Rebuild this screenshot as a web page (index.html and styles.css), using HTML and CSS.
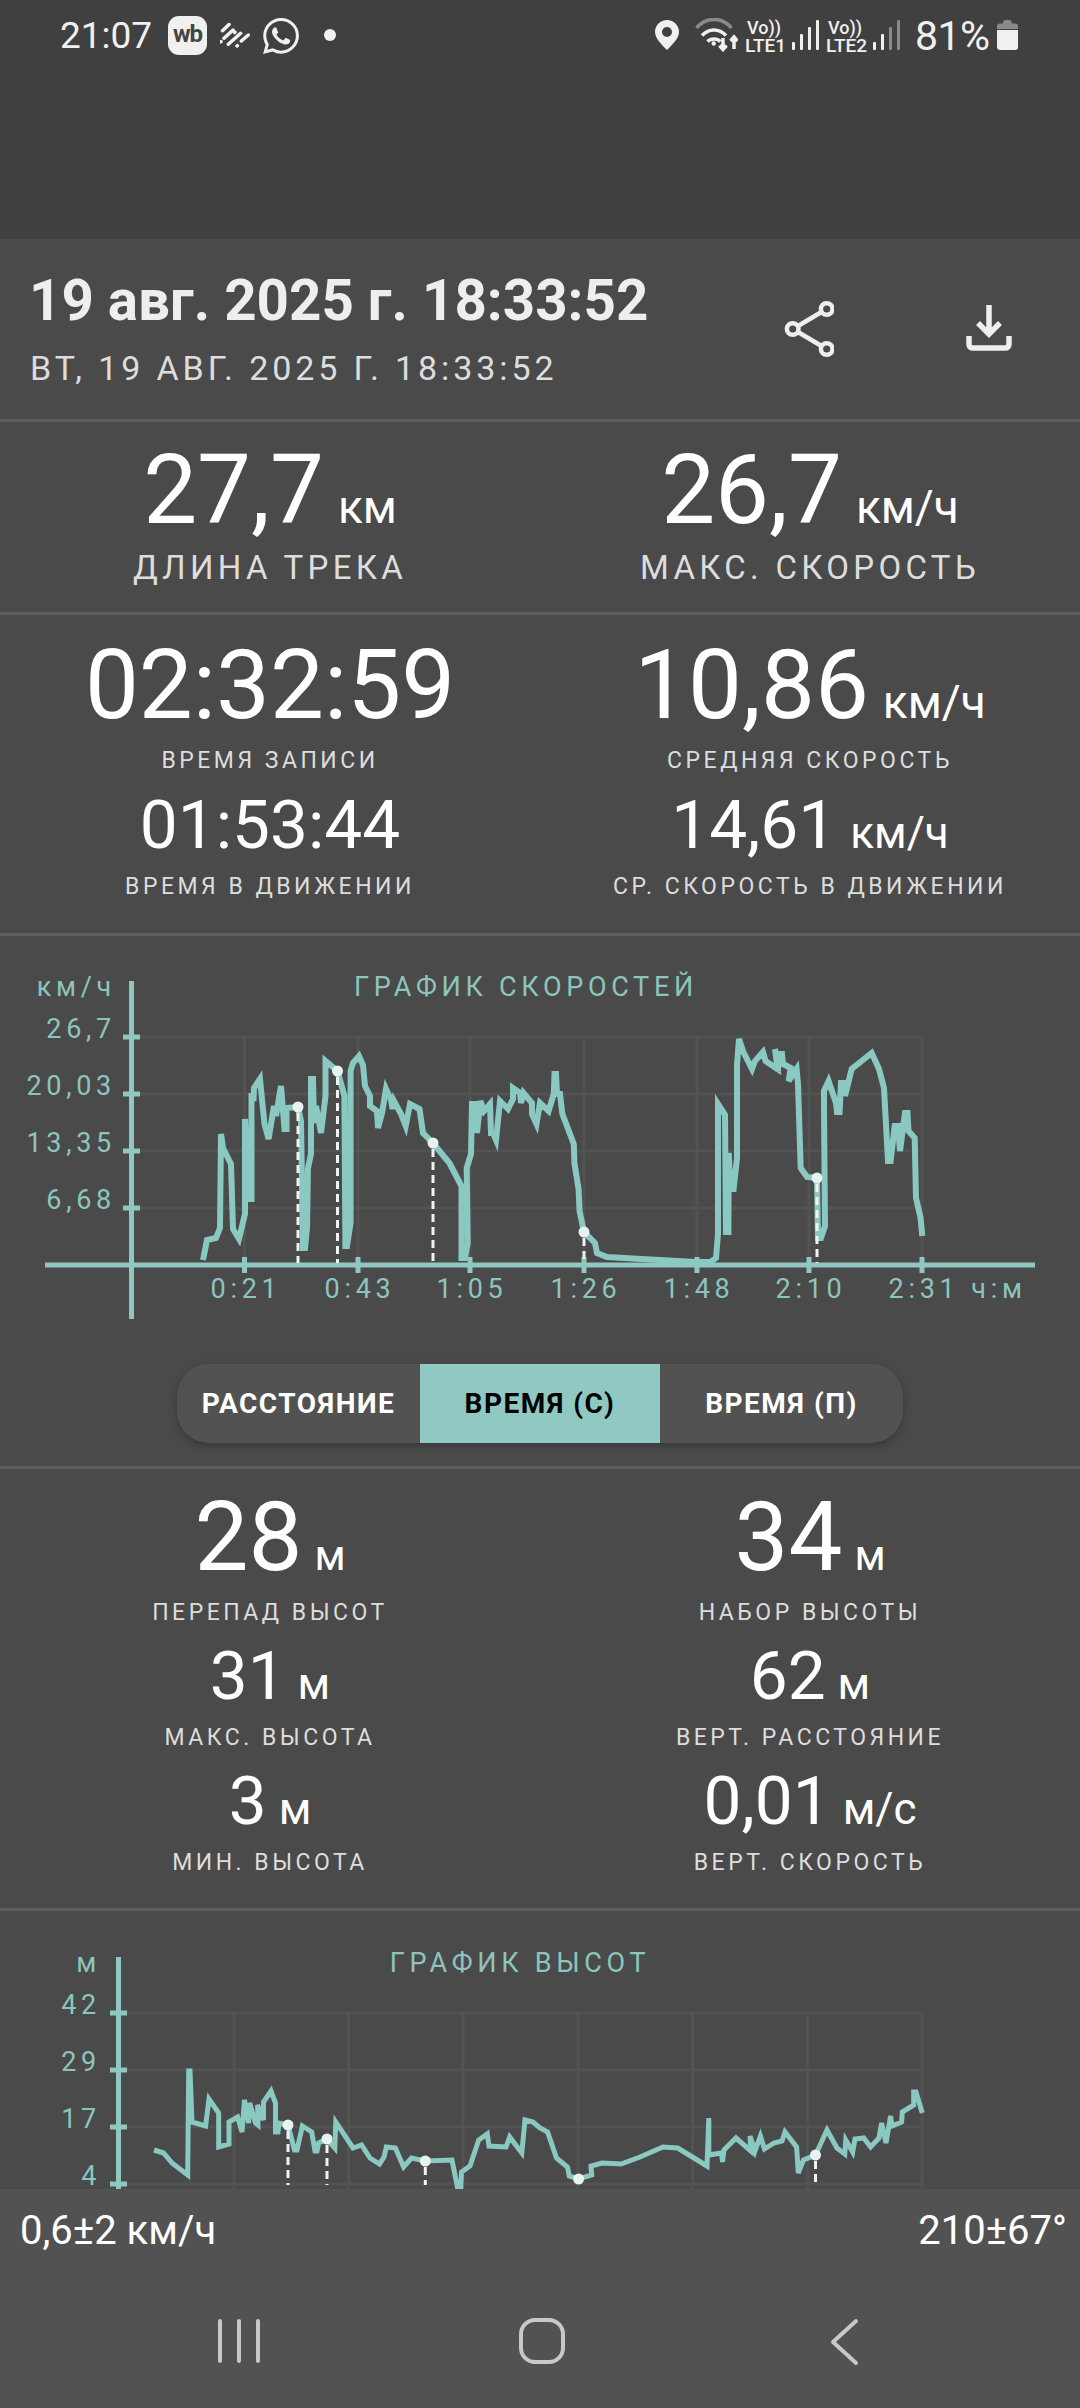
FILE: index.html
```html
<!DOCTYPE html>
<html lang="ru">
	<head>
		<meta charset="utf-8">
		<meta name="viewport" content="width=device-width, initial-scale=1">
		<title>Трек</title>
		<link rel="stylesheet" href="styles.css">
	</head>

	<body>
		<div id="app">
			<div id="statusbar">
				<span class="sb-time">21:07</span>
				<span class="sb-wb">wb</span>
				<svg class="sb-streak" width="30" height="26" viewBox="221 22 30 26">
					<path d="M223.5 30.7 230 24.5M225 38.3 234 30M229.3 44.3 241.7 33.3M242.3 41 249.3 35M221.5 42 222 41.6M238 46 238.4 45.7M235.6 32.6 236 32.2"/>
				</svg>
				<svg class="sb-whatsapp" width="36" height="36" viewBox="0 0 24 24">
					<path d="M17.472 14.382c-.297-.149-1.758-.867-2.03-.967-.273-.099-.471-.148-.67.15-.197.297-.767.966-.94 1.164-.173.199-.347.223-.644.075-.297-.15-1.255-.463-2.39-1.475-.883-.788-1.48-1.761-1.653-2.059-.173-.297-.018-.458.13-.606.134-.133.298-.347.446-.52.149-.174.198-.298.298-.497.099-.198.05-.371-.025-.52-.075-.149-.669-1.612-.916-2.207-.242-.579-.487-.5-.669-.51-.173-.008-.371-.01-.57-.01-.198 0-.52.074-.792.372-.272.297-1.04 1.016-1.04 2.479 0 1.462 1.065 2.875 1.213 3.074.149.198 2.096 3.2 5.077 4.487.709.306 1.262.489 1.694.625.712.227 1.36.195 1.871.118.571-.085 1.758-.719 2.006-1.413.248-.694.248-1.289.173-1.413-.074-.124-.272-.198-.57-.347m-5.421 7.403h-.004a9.87 9.87 0 01-5.031-1.378l-.361-.214-3.741.982.998-3.648-.235-.374a9.86 9.86 0 01-1.51-5.26c.001-5.45 4.436-9.884 9.888-9.884 2.64 0 5.122 1.03 6.988 2.898a9.825 9.825 0 012.893 6.994c-.003 5.45-4.437 9.884-9.885 9.884m8.413-18.297A11.815 11.815 0 0012.05 0C5.495 0 .16 5.335.157 11.892c0 2.096.547 4.142 1.588 5.945L.057 24l6.305-1.654a11.882 11.882 0 005.683 1.448h.005c6.554 0 11.89-5.335 11.893-11.893a11.821 11.821 0 00-3.48-8.413z"/>
				</svg>
				<span class="sb-dot"></span>

				<svg class="sb-pin" width="24" height="30" viewBox="0 0 24 30">
					<path fill-rule="evenodd" d="M12 0C5.4 0 0 5.2 0 11.8 0 19 7.6 25.400 12 30c4.400-4.600 12-11 12-18.200C24 5.200 18.600 0 12 0Zm0 7a5 5 0 1 1 0 10 5 5 0 0 1 0-10Z"/>
				</svg>
				<svg class="sb-wifi" width="43" height="34" viewBox="695 18 43 34">
					<path class="dim" d="M696.500 28C706 16.500 722 16.500 731.500 28"/>
					<path d="M702 35.500C709 28 719 28 726 35.500M707.500 41.500C711 38 717 38 720.500 41.500M723 38v11M719.500 45.500 723 49.500 726.500 45.500M734 49V37M730.500 41 734 37 737.500 41"/>
					<circle cx="713.700" cy="43.500" r="2.200"/>
				</svg>
				<div class="sb-net">
					<span class="sb-vo">Vo))</span>
					<span class="sb-lte">LTE1</span>
				</div>
				<div class="sb-signal">
					<i class="b1"></i><i class="b2"></i><i class="b3"></i><i class="b4"></i>
				</div>
				<div class="sb-net">
					<span class="sb-vo">Vo))</span>
					<span class="sb-lte">LTE2</span>
				</div>
				<div class="sb-signal weak">
					<i class="b1"></i><i class="b2"></i><i class="b3"></i><i class="b4"></i>
				</div>
				<span class="sb-percent">81%</span>
				<svg class="sb-battery" width="21" height="30" viewBox="0 0 21 30">
					<path class="dim" d="M6 3.500C6 1.500 7 0 8.500 0h4C14 0 15 1.500 15 3.500H18C20 3.500 21 4.500 21 6.500V9H0V6.500C0 4.500 1 3.500 3 3.500Z"/>
					<path d="M0 10H21V27C21 29 20 30 18 30H3C1 30 0 29 0 27Z"/>
				</svg>
			</div>

			<div id="scroller">
				<section class="head">
					<div class="head-text">
						<h1>19 авг. 2025 г. 18:33:52</h1>
						<p>ВТ, 19 АВГ. 2025 Г. 18:33:52</p>
					</div>
					<svg class="icon-share" width="50" height="58" viewBox="784 300 50 58">
						<path d="M798 326 821.500 312M798 332 821.500 346"/>
						<circle cx="826.700" cy="309" r="5.800"/>
						<circle cx="792.700" cy="329" r="5.800"/>
						<circle cx="826.700" cy="349" r="5.800"/>
					</svg>
					<svg class="icon-download" width="46" height="46" viewBox="967 306 46 46">
						<path d="M990 306V335M979 324 990 335 1001 324M970 337V345C970 347.500 971.500 349 974 349H1006C1008.500 349 1010 347.500 1010 345V337"/>
					</svg>
				</section>

				<section class="stats stats-top">
					<div class="stat">
						<div class="value xl">27,7<span class="unit">км</span></div>
						<div class="label lg">ДЛИНА ТРЕКА</div>
					</div>
					<div class="stat">
						<div class="value xl">26,7<span class="unit">км/ч</span></div>
						<div class="label lg">МАКС. СКОРОСТЬ</div>
					</div>
				</section>

				<section class="stats stats-time">
					<div class="stat">
						<div class="value xl">02:32:59</div>
						<div class="label">ВРЕМЯ ЗАПИСИ</div>
					</div>
					<div class="stat">
						<div class="value xl">10,86<span class="unit">км/ч</span></div>
						<div class="label">СРЕДНЯЯ СКОРОСТЬ</div>
					</div>
					<div class="stat">
						<div class="value l">01:53:44</div>
						<div class="label">ВРЕМЯ В ДВИЖЕНИИ</div>
					</div>
					<div class="stat">
						<div class="value l">14,61<span class="unit">км/ч</span></div>
						<div class="label">СР. СКОРОСТЬ В ДВИЖЕНИИ</div>
					</div>
				</section>

				<section class="chart-block">
					<svg class="chart" width="1080" height="400" viewBox="0 935 1080 400">
						<path class="grid" d="M140 1036H922M140 1093H922M140 1150H922M140 1207H922M244.500 1036V1264M358 1036V1264M470 1036V1264M584 1036V1264M697 1036V1264M809 1036V1264M922 1036V1264"/>
						<path class="axis" d="M131.500 980V1318M45 1264H1035M123 1036H140M123 1093H140M123 1150H140M123 1207H140M244.500 1256V1272M358 1256V1272M470 1256V1272M584 1256V1272M697 1256V1272M809 1256V1272M922 1256V1272"/>
						<polyline class="line" points="203,1259 207,1239 216,1237 220,1227 221,1133 223,1147 231,1163 233,1228 239,1238 245,1213 245,1118 249,1198 251.500,1198 251.500,1092 253.500,1100 254,1087 260,1078 264.500,1123 268.600,1138 274,1105 276,1115 281,1085 284.500,1128 286.500,1128 286.500,1107 298,1106 301,1120 303,1247 305,1247 307,1227 308,1167 311,1153 311,1078 313,1078 314,1122 316,1105 321,1132 325.500,1095 325.500,1060 337.500,1070 344.400,1095 345.400,1245 347,1245 350.600,1222 350.600,1070 353,1062 359,1055 363,1064 365,1085 370,1095 370,1105 377,1110 378,1127 382,1112 386,1088 391,1099 392.600,1108 394,1100 401,1113 405.700,1125 410,1103 419.500,1108 423,1132 433,1142 449.400,1162 461.500,1185 461.500,1257 465,1257 467.700,1242 466.700,1167 471,1153 472,1103 475,1103 477,1132 480.400,1100 484,1110 490,1103 491,1132 493,1132 496,1139 500,1100 508,1108 513,1098 513,1087 520,1092 521,1102 523.500,1092 532,1102 532,1113 536.500,1123 540,1102 548.600,1110 553.800,1093 554.500,1073 556,1073 557,1093 560,1093 562.400,1113 573.800,1143 574.400,1162 578.600,1188 579.600,1210 584,1231 595,1242 597,1252 607,1256 695,1261 710.500,1261 716,1257 718,1233 718,1103 725,1114 726,1231 728.400,1231 728.700,1152 730.500,1188 733.600,1188 737,1157 737,1064 739,1038 743,1050 752,1068 755,1060 763,1051 765.600,1060 777.600,1068 775,1048 778,1070 779,1053 782,1053 783,1063 790.700,1067 788.600,1080 796.600,1068 798,1083 800.700,1167 807,1176 817,1177 818,1237 821,1237 825,1225 824,1107 824,1090 828.600,1080 836,1102 837,1111 839.600,1111 841,1082 845,1082 845,1095 851.700,1068 871.700,1052 879,1068 884,1087 888,1160 890.600,1160 894.700,1125 898,1125 900,1150 905,1112 907.500,1112 908.500,1130 914.700,1137 916,1197 920.600,1217 922.300,1235"/>
						<path class="drop" d="M298 1112V1262M337.500 1076V1262M433 1148V1262M584 1237V1262M817 1183V1262"/>
						<circle class="point" cx="298" cy="1106" r="5.500"/>
						<circle class="point" cx="337.500" cy="1070" r="5.500"/>
						<circle class="point" cx="433" cy="1142" r="5.500"/>
						<circle class="point" cx="584" cy="1231" r="5.500"/>
						<circle class="point" cx="817" cy="1177" r="5.500"/>

						<text class="chart-title" x="526" y="995">ГРАФИК СКОРОСТЕЙ</text>
						<text class="tick-y" x="116" y="995">км/ч</text>
						<text class="tick-y" x="116" y="1037">26,7</text>
						<text class="tick-y" x="116" y="1094">20,03</text>
						<text class="tick-y" x="116" y="1151">13,35</text>
						<text class="tick-y" x="116" y="1208">6,68</text>
						<text class="tick-x" x="246" y="1297">0:21</text>
						<text class="tick-x" x="360" y="1297">0:43</text>
						<text class="tick-x" x="472" y="1297">1:05</text>
						<text class="tick-x" x="586" y="1297">1:26</text>
						<text class="tick-x" x="699" y="1297">1:48</text>
						<text class="tick-x" x="811" y="1297">2:10</text>
						<text class="tick-x" x="924" y="1297">2:31</text>
						<text class="tick-x" x="999" y="1297">ч:м</text>
					</svg>
					<div class="toggle">
						<div class="toggle-item">РАССТОЯНИЕ</div>
						<div class="toggle-item on">ВРЕМЯ (С)</div>
						<div class="toggle-item">ВРЕМЯ (П)</div>
					</div>
				</section>

				<section class="stats stats-alt">
					<div class="stat">
						<div class="value xl">28<span class="unit">м</span></div>
						<div class="label">ПЕРЕПАД ВЫСОТ</div>
					</div>
					<div class="stat">
						<div class="value xl">34<span class="unit">м</span></div>
						<div class="label">НАБОР ВЫСОТЫ</div>
					</div>
					<div class="stat">
						<div class="value l">31<span class="unit">м</span></div>
						<div class="label">МАКС. ВЫСОТА</div>
					</div>
					<div class="stat">
						<div class="value l">62<span class="unit">м</span></div>
						<div class="label">ВЕРТ. РАССТОЯНИЕ</div>
					</div>
					<div class="stat">
						<div class="value l">3<span class="unit">м</span></div>
						<div class="label">МИН. ВЫСОТА</div>
					</div>
					<div class="stat">
						<div class="value l">0,01<span class="unit">м/с</span></div>
						<div class="label">ВЕРТ. СКОРОСТЬ</div>
					</div>
				</section>

				<svg class="chart" width="1080" height="278" viewBox="0 1911 1080 278">
					<path class="grid" d="M127 2013H922M127 2070H922M127 2127H922M127 2184H922M234 2013V2189M348.500 2013V2189M463 2013V2189M578 2013V2189M692.600 2013V2189M807.600 2013V2189M922 2013V2189"/>
					<path class="axis" d="M118.500 1957V2189M110 2013H127M110 2070H127M110 2127H127M110 2184H127"/>
					<polyline class="line thin" points="154,2150 163.600,2153 172,2163 187.700,2175 188.700,2071 190,2071 192,2122 205.600,2126 209,2099 218.700,2113 218.700,2147 229,2144 229,2122 237.600,2117 242,2132 244.500,2100 248.600,2123 249.700,2103 255.500,2123 258,2125 257.600,2105 263.500,2120 263.500,2102 271,2091 275.500,2103 275.500,2132 278,2132 279,2123 288,2125 294.500,2150 297,2150 302.400,2126 311.700,2132 315,2151 317,2151 318.600,2143 327,2139 334.800,2148 335.800,2122 353,2148 361.600,2145 370,2158 379.500,2164 384,2157 386.400,2147 395.400,2148 403.600,2167 411.500,2158 425.300,2161 452,2160 457.400,2187 460.800,2187 461.500,2172 470,2166 478.700,2140 487.300,2134 489,2146 506,2147 509.700,2137 521.800,2153 525,2120 533,2122 540,2128 547.600,2132 556.500,2158 567.500,2167 569.300,2176 578.600,2179 591.700,2175 591,2166 602,2163 621,2164 640,2157 663,2147 677.800,2148 707,2166 708.800,2118 708.800,2155 721.500,2153 722.500,2162 724,2150 736,2138 750.800,2151 750,2136 755,2151 760.400,2136 764.500,2149 774,2143 782,2141 785,2132 796.600,2147 798.300,2173 803.500,2160 815.500,2155 827,2130 837,2148 844.800,2154 845.800,2140 852.700,2152 855,2139 863.700,2138 870.600,2147 879,2138 881.600,2123 886,2143 890.600,2116 892,2126 901.600,2122 902.300,2112 913.700,2105 913.700,2092 916,2092 922.300,2113"/>
					<path class="drop" d="M288 2131V2185M327 2145V2185M425.300 2167V2185M815.500 2161V2185"/>
					<circle class="point" cx="288" cy="2125" r="5.500"/>
					<circle class="point" cx="327" cy="2139" r="5.500"/>
					<circle class="point" cx="425.300" cy="2161" r="5.500"/>
					<circle class="point" cx="578.600" cy="2179" r="5.500"/>
					<circle class="point" cx="815.500" cy="2155" r="5.500"/>

					<text class="chart-title" x="520" y="1972">ГРАФИК ВЫСОТ</text>
					<text class="tick-y" x="101" y="1972">м</text>
					<text class="tick-y" x="101" y="2014">42</text>
					<text class="tick-y" x="101" y="2071">29</text>
					<text class="tick-y" x="101" y="2128">17</text>
					<text class="tick-y" x="101" y="2185">4</text>
				</svg>
			</div>

			<div id="bottom">
				<div class="gps">
					<span>0,6±2 км/ч</span>
					<span>210±67°</span>
				</div>
				<div class="nav">
					<div class="nav-slot">
						<svg width="42" height="46" viewBox="0 0 42 46">
							<path d="M2 3V43M21 3V43M40 3V43"/>
						</svg>
					</div>
					<div class="nav-slot">
						<svg width="46" height="46" viewBox="0 0 46 46">
							<rect x="2" y="2" width="42" height="42" rx="14"/>
						</svg>
					</div>
					<div class="nav-slot">
						<svg width="30" height="48" viewBox="0 0 30 48">
							<path d="M26 3 3 24 26 45"/>
						</svg>
					</div>
				</div>
			</div>
		</div>
	</body>
</html>
```

FILE: styles.css
```css
* {
	box-sizing: border-box;
}
html, body {
	margin: 0;
	height: 100%;
}
body {
	font-family: Roboto, "Liberation Sans", sans-serif;
	background: #4a4a4a;
	color: white;
}
#app {
	width: 1080px;
	height: 2408px;
	display: flex;
	flex-direction: column;
	overflow: hidden;
}

/* status bar */
#statusbar {
	height: 239px;
	flex: none;
	display: flex;
	align-items: flex-start;
	padding: 16px 0 0 60px;
	background: #404040;
	color: #f0f0f0;
}
#statusbar svg {
	flex: none;
	display: block;
	fill: #f0f0f0;
}
.sb-time {
	font-size: 37px;
	line-height: 38px;
	margin-top: 1px;
	width: 93px;
}
.sb-wb {
	width: 39px;
	height: 39px;
	margin-left: 15px;
	border-radius: 11px;
	background: #f0f0f0;
	color: #444;
	font-size: 24px;
	font-weight: 700;
	line-height: 37px;
	text-align: center;
	letter-spacing: -1px;
}
#statusbar .sb-streak {
	margin: 6px 0 0 13px;
	fill: none;
	stroke: #f0f0f0;
	stroke-width: 3.5;
	stroke-linecap: round;
}
.sb-whatsapp {
	margin: 2px 0 0 13px;
}
.sb-dot {
	width: 12px;
	height: 12px;
	margin: 13px 0 0 25px;
	border-radius: 50%;
	background: #f0f0f0;
}
.sb-pin {
	margin: 4px 0 0 319px;
}
#statusbar .sb-wifi {
	margin: 2px 0 0 16px;
	fill: none;
	stroke: #f0f0f0;
	stroke-width: 3.5;
}
.sb-wifi circle {
	fill: #f0f0f0;
	stroke: none;
}
.sb-wifi .dim {
	stroke: #8a8a8a;
}
.sb-net {
	width: 38px;
	margin-left: 7px;
	text-align: center;
	white-space: nowrap;
}
.sb-vo, .sb-lte {
	display: block;
	font-weight: 500;
}
.sb-vo {
	font-size: 18px;
	line-height: 19px;
	margin-top: 2px;
}
.sb-lte {
	font-size: 19px;
	line-height: 17px;
}
.sb-signal {
	display: flex;
	align-items: flex-end;
	gap: 5px;
	height: 30px;
	margin: 4px 0 0 9px;
}
.sb-signal i {
	width: 3px;
	background: #f0f0f0;
	border-radius: 1px;
}
.sb-signal .b1 { height: 8px; }
.sb-signal .b2 { height: 16px; }
.sb-signal .b3 { height: 23px; }
.sb-signal .b4 { height: 30px; }
.sb-signal.weak .b3, .sb-signal.weak .b4 {
	background: #8a8a8a;
}
.sb-percent {
	font-size: 41px;
	line-height: 38px;
	margin: 1px 0 0 15px;
	letter-spacing: -0.5px;
}
.sb-battery {
	margin: 4px 0 0 7px;
}
.sb-battery .dim {
	fill: #8a8a8a;
}

/* scrolling part */
#scroller {
	flex: 1;
	min-height: 0;
	overflow: hidden;
}
section {
	border-bottom: solid 3px #5e5e5e;
}
.head {
	height: 183px;
	display: flex;
	align-items: flex-start;
	padding: 0 0 0 30px;
}
.head-text {
	width: 754px;
	flex: none;
}
.head h1 {
	margin: 32px 0 0 -1px;
	font-size: 56.500px;
	line-height: 60px;
	font-weight: 700;
	color: #eee;
	white-space: nowrap;
}
.head p {
	margin: 18px 0 0;
	font-size: 34px;
	line-height: 38px;
	letter-spacing: 3.900px;
	color: #ddd;
	white-space: nowrap;
}
.icon-share {
	margin-top: 61px;
	fill: none;
	stroke: #eee;
	stroke-width: 4.500;
}
.icon-download {
	margin: 66px 0 0 132px;
	fill: none;
	stroke: #eee;
	stroke-width: 5.500;
}

/* stat cells */
.stats {
	display: grid;
	grid-template-columns: 1fr 1fr;
	text-align: center;
}
.stats-top {
	padding: 18px 0 24px;
}
.stats-time {
	padding: 20px 0 32px;
	row-gap: 14px;
}
.stats-alt {
	padding: 18px 0 31px;
	row-gap: 13px;
}
.value {
	white-space: nowrap;
}
.value.xl {
	font-size: 96px;
	line-height: 100px;
}
.value.l {
	font-size: 67.500px;
	line-height: 72px;
}
.unit {
	margin-left: 14px;
	font-size: 46px;
	line-height: 1;
}
.value.l .unit {
	font-size: 44px;
}
.stats-alt .unit {
	margin-left: 12px;
	font-size: 42px;
}
.label {
	margin-top: 12px;
	font-size: 23px;
	line-height: 28px;
	letter-spacing: 3.500px;
	color: #ddd;
	white-space: nowrap;
}
.label.lg {
	margin-top: 8px;
	font-size: 33px;
	line-height: 40px;
	letter-spacing: 4.300px;
}

/* charts */
.chart {
	display: block;
}
.chart .grid {
	fill: none;
	stroke: #535353;
	stroke-width: 3;
}
.chart .axis {
	fill: none;
	stroke: #8ec8c1;
	stroke-width: 5;
}
.chart .drop {
	fill: none;
	stroke: #f2f2f2;
	stroke-width: 3;
	stroke-dasharray: 8 5;
}
.chart .line {
	fill: none;
	stroke: #8ac8c2;
	stroke-width: 6;
}
.chart .line.thin {
	stroke-width: 5;
}
.chart .point {
	fill: #e6f3f1;
}
.chart-title, .tick-x, .tick-y {
	fill: #8cc5be;
	font-size: 27px;
	letter-spacing: 4.700px;
}
.chart-title {
	text-anchor: middle;
}
.tick-x {
	text-anchor: middle;
}
.tick-y {
	text-anchor: end;
}

.toggle {
	display: flex;
	width: 726px;
	height: 79px;
	margin: 28px auto 23px;
	border-radius: 32px;
	overflow: hidden;
	background: #525252;
	box-shadow: 0 3px 8px rgba(0, 0, 0, 0.25);
}
.toggle-item {
	flex: 1;
	display: flex;
	align-items: center;
	justify-content: center;
	font-size: 28px;
	font-weight: 700;
	letter-spacing: 1.500px;
}
.toggle-item.on {
	flex: none;
	width: 240px;
	background: #8fc9c2;
	color: #000;
}

/* bottom bar */
#bottom {
	height: 219px;
	flex: none;
	background: #525252;
}
.gps {
	display: flex;
	justify-content: space-between;
	padding: 18px 13px 0 20px;
	font-size: 40px;
	line-height: 48px;
}
.nav {
	display: flex;
	justify-content: center;
	margin-top: 63px;
	padding-left: 4px;
}
.nav-slot {
	width: 303px;
	display: flex;
	justify-content: center;
}
.nav svg {
	display: block;
	fill: none;
	stroke: #c8c8c8;
	stroke-width: 4;
	stroke-linecap: round;
	stroke-linejoin: round;
}
```
